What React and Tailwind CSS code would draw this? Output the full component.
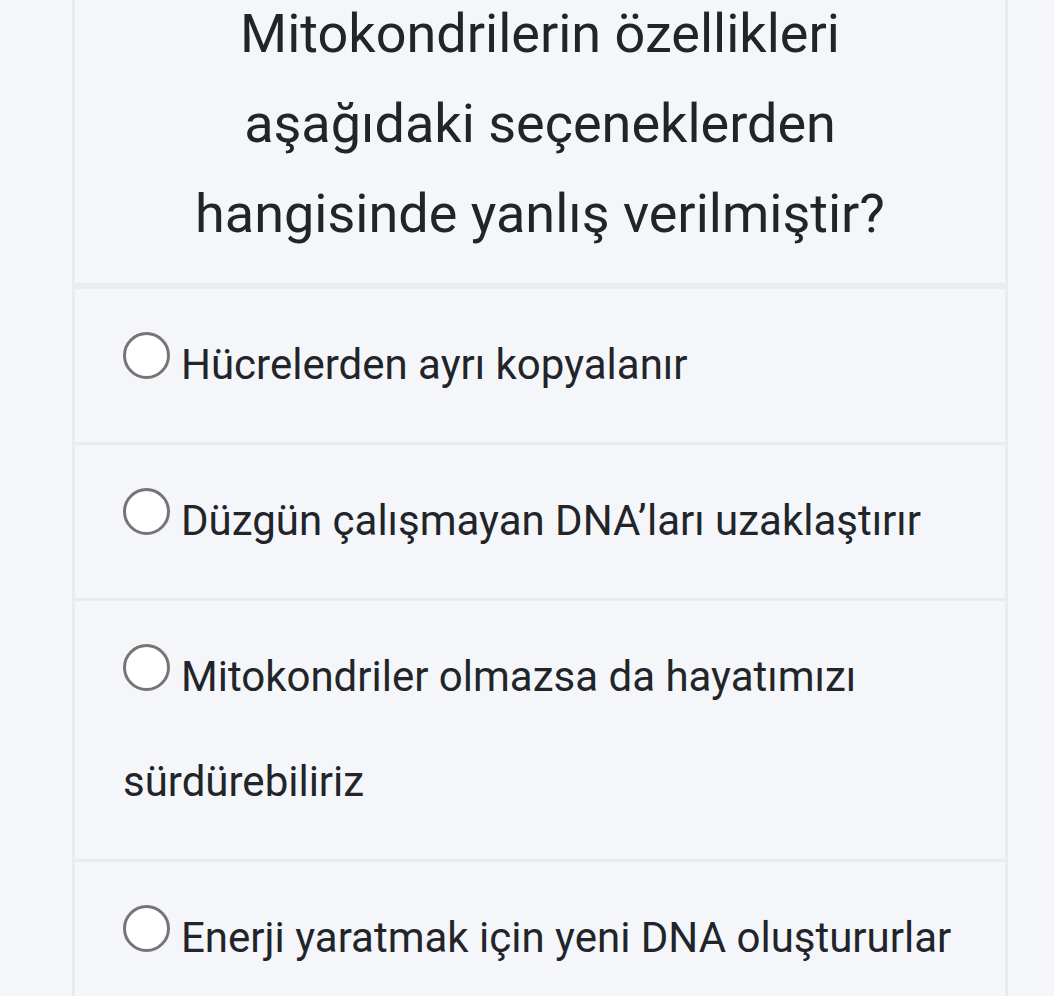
const options = [
  "Hücrelerden ayrı kopyalanır",
  "Düzgün çalışmayan DNA’ları uzaklaştırır",
  "Mitokondriler olmazsa da hayatımızı sürdürebiliriz",
  "Enerji yaratmak için yeni DNA oluştururlar",
];

const App = () => {
  return (
    <div
      className="min-h-[996px] overflow-hidden bg-[#f5f6fa] text-[#212529]"
      style={{ fontFamily: "Roboto, 'Noto Sans', sans-serif" }}
    >
      <div className="ml-[72px] w-[936px] border-x-[3px] border-[#e9ebef]">
        <div className="border-b-[3px] border-[#e9ebef] pb-[24px]">
          <h2 className="-mt-[11px] px-[40px] text-center text-[54px] font-normal leading-[90px]">
            Mitokondrilerin özellikleri
            <br />
            aşağıdaki seçeneklerden
            <br />
            hangisinde yanlış verilmiştir?
          </h2>
        </div>
        {options.map((opt) => (
          <label
            key={opt}
            className="block border-t-[3px] border-[#e9ebef] pl-[48px] pr-[40px] pt-[23px] pb-[25px] text-[42px] leading-[105px]"
          >
            <span className="mr-[11px] inline-block h-[47px] w-[47px] rounded-full border-[3px] border-[#757575] bg-white align-baseline" />
            {opt}
          </label>
        ))}
      </div>
    </div>
  );
};

export default App;
